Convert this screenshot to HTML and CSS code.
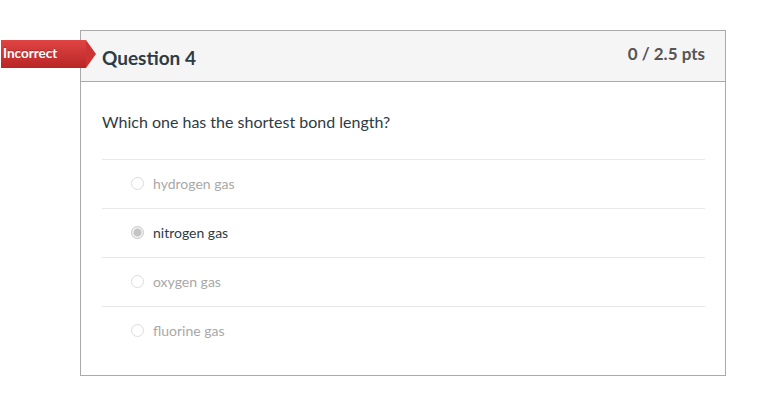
FILE: index.html
```html
<!DOCTYPE html>
<html lang="en">
<head>
  <meta charset="UTF-8">
  <title>Question 4</title>
  <link rel="stylesheet" href="styles.css">
</head>
<body>
  <div class="page">
    <div class="question">
      <span class="badge">Incorrect</span>
      <header class="question-header">
        <h2>Question 4</h2>
        <span class="points">0 / 2.5 pts</span>
      </header>
      <div class="question-body">
        <p class="question-text">Which one has the shortest bond length?</p>
        <div class="answers">
          <div class="answer"><span class="radio"></span>hydrogen gas</div>
          <div class="answer selected"><span class="radio"></span>nitrogen gas</div>
          <div class="answer"><span class="radio"></span>oxygen gas</div>
          <div class="answer"><span class="radio"></span>fluorine gas</div>
        </div>
      </div>
    </div>
  </div>
</body>
</html>
```

FILE: styles.css
```css
body {
  margin: 0;
  background: #fff;
  font-family: Lato, "Open Sans", sans-serif;
  color: #2d3b45;
}

.page {
  padding: 30px 0 0 80px;
}

.question {
  position: relative;
  width: 644px;
  height: 344px;
  border: 1px solid #aaa;
}

.badge {
  position: absolute;
  left: -80px;
  top: 9px;
  height: 28px;
  width: 85px;
  box-sizing: border-box;
  padding-left: 2px;
  line-height: 26px;
  font-size: 13.5px;
  font-weight: bold;
  color: #fff;
  background: linear-gradient(#e04443, #b82626);
  text-shadow: 0 -1px 0 rgba(0, 0, 0, 0.2);
}

.badge::after {
  content: "";
  position: absolute;
  right: -10px;
  top: 0;
  border-top: 14px solid transparent;
  border-bottom: 14px solid transparent;
  border-left: 10px solid #cc3333;
}

.question-header {
  display: flex;
  justify-content: space-between;
  align-items: center;
  height: 50px;
  padding: 0 20px 0 21px;
  background: #f5f5f5;
  border-bottom: 1px solid #aaa;
}

.question-header h2 {
  margin: 0;
  font-size: 19px;
  font-weight: bold;
  margin-top: 2px;
}

.points {
  font-size: 17px;
  font-weight: bold;
  color: #555;
  margin-top: -6px;
}

.question-body {
  padding: 28px 20px 0 21px;
}

.question-text {
  margin: 0 0 25px;
  font-size: 16px;
  line-height: 24px;
}

.answer {
  display: flex;
  align-items: center;
  height: 46px;
  padding: 0 0 2px 29px;
  border-top: 1px solid #e8e8e8;
  font-size: 14px;
  color: #a8a8a8;
}

.answer .radio {
  width: 11px;
  height: 11px;
  border: 1px solid #dcdcdc;
  border-radius: 50%;
  margin-right: 9px;
  background: #fff;
}

.answer.selected {
  color: #2d3b45;
}

.answer.selected .radio {
  border-color: #c8c8c8;
  background: radial-gradient(circle, #c4c4c4 0, #c4c4c4 3.5px, #f2f2f2 4.5px);
}
```
